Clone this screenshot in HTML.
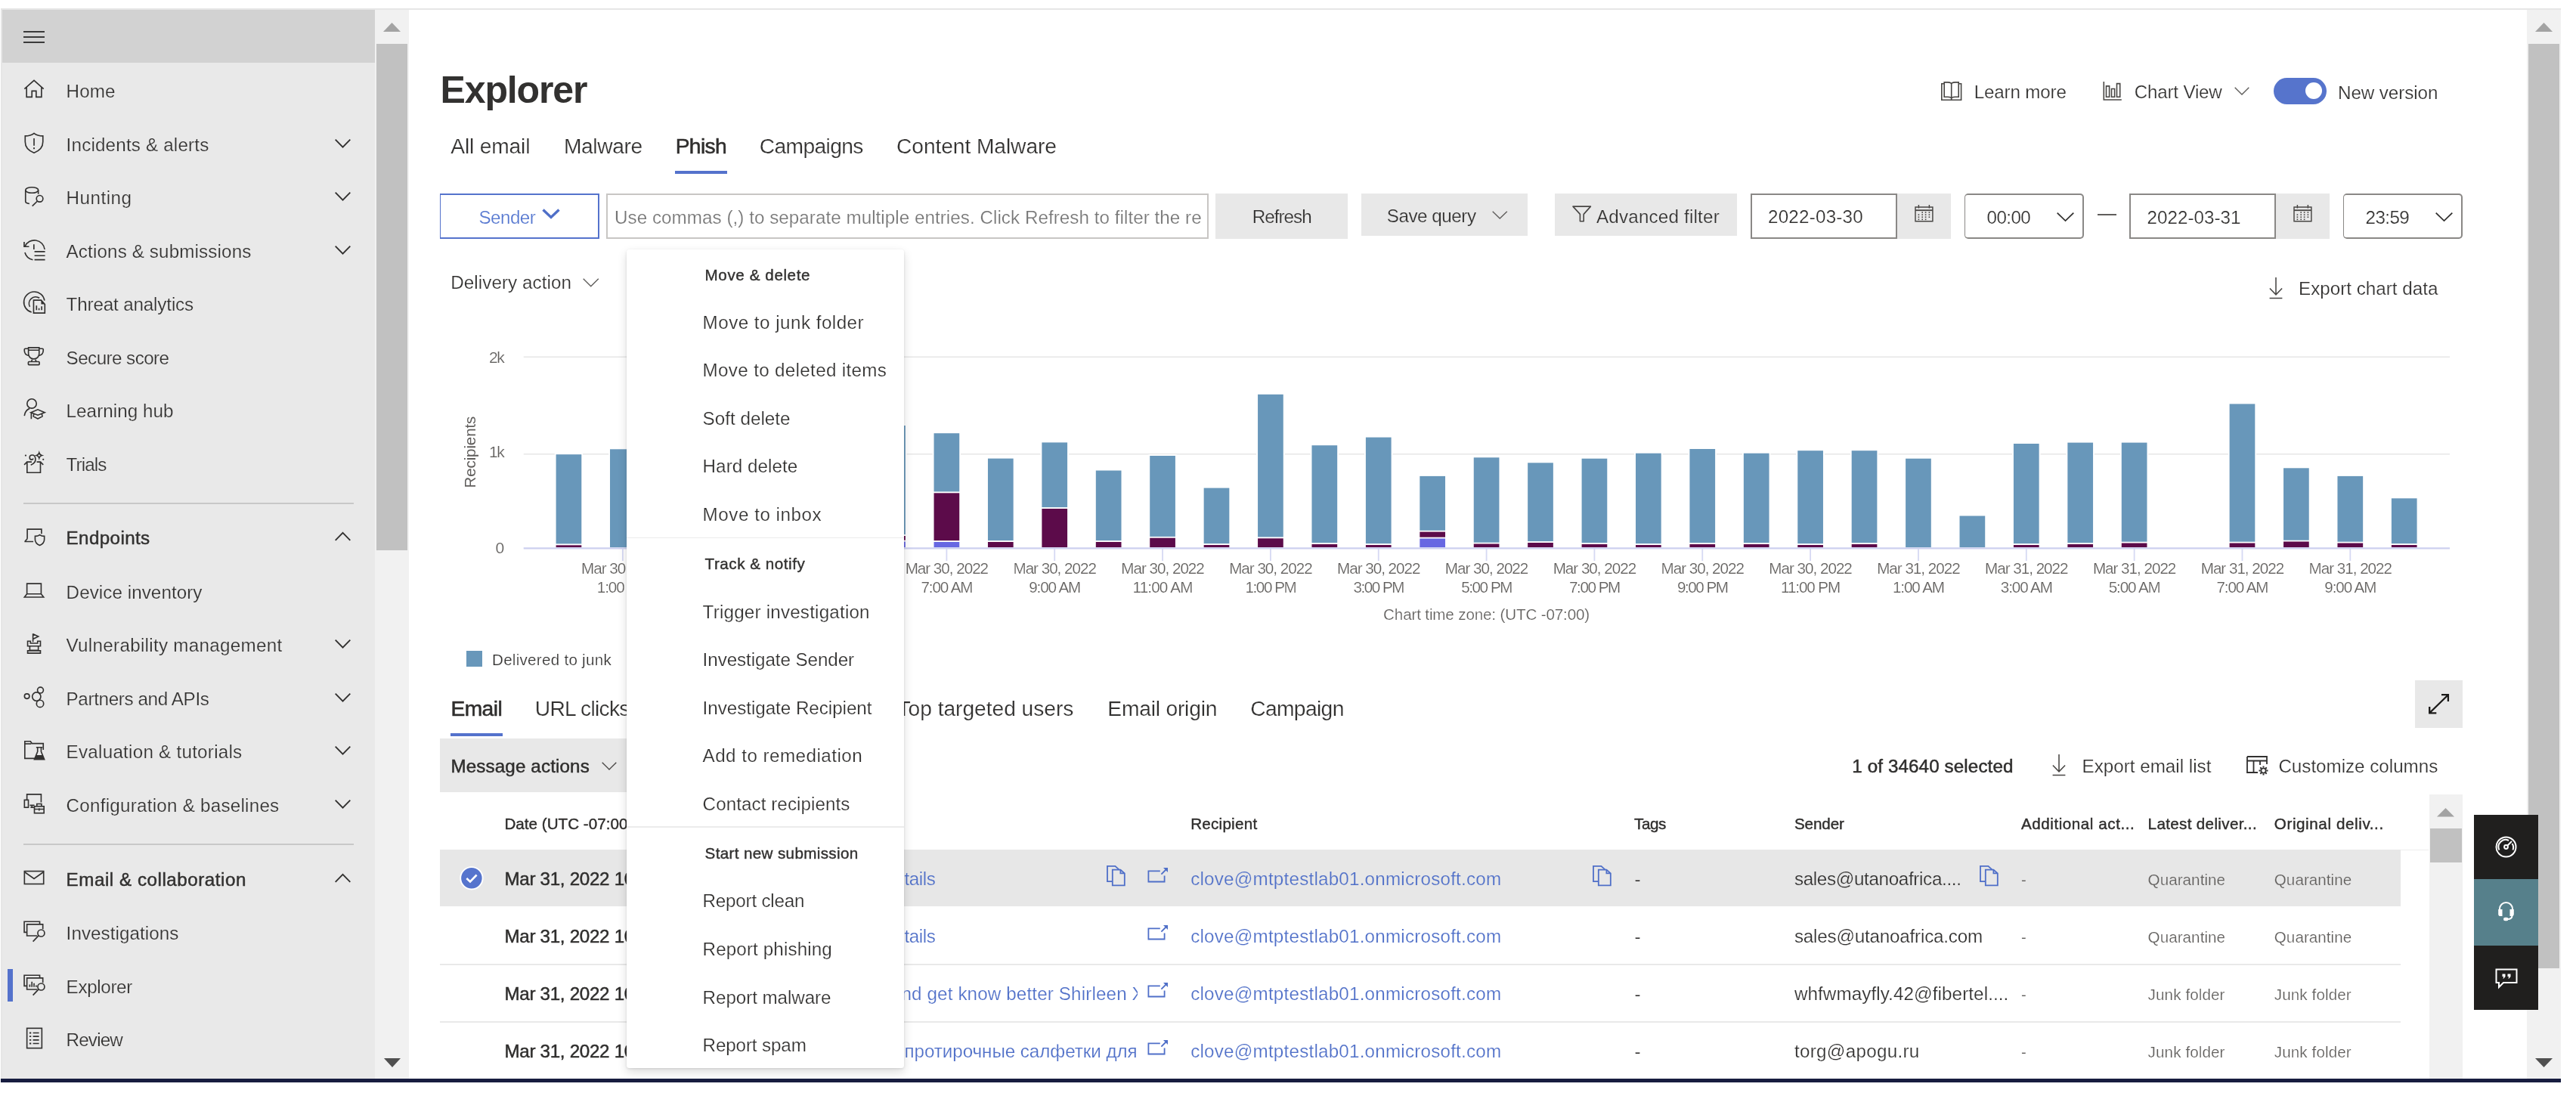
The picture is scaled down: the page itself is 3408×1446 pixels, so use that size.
<!DOCTYPE html>
<html lang="en"><head><meta charset="utf-8"><title>Explorer - Microsoft 365 Defender</title>
<style>
html,body{margin:0;padding:0;background:#fff;}
body{width:3408px;height:1446px;position:relative;overflow:hidden;font-family:"Liberation Sans",Arial,sans-serif;}
.t{position:absolute;white-space:nowrap;}
.r{position:absolute;}
#root{position:absolute;left:0;top:0;width:3408px;height:1446px;will-change:transform;}
svg{overflow:visible;}
</style></head><body><div id="root">
<div class="r" style="left:1.00px;top:11.00px;width:3387.00px;height:1421.00px;background:#e6e6e6;"></div>
<div class="r" style="left:3.00px;top:13.00px;width:3385.00px;height:1415.00px;background:#ffffff;"></div>
<div class="r" style="left:1.00px;top:1427.00px;width:3387.00px;height:5.00px;background:#171d40;"></div>
<div class="r" style="left:3.00px;top:13.00px;width:493.00px;height:1414.00px;background:#e9e9e9;"></div>
<div class="r" style="left:3.00px;top:13.00px;width:493.00px;height:69.60px;background:#d2d2d2;"></div>
<div class="r" style="left:31.00px;top:41.00px;width:28.00px;height:2.10px;background:#3a3a3a;"></div>
<div class="r" style="left:31.00px;top:48.00px;width:28.00px;height:2.10px;background:#3a3a3a;"></div>
<div class="r" style="left:31.00px;top:55.00px;width:28.00px;height:2.10px;background:#3a3a3a;"></div>
<div class="r" style="left:496.00px;top:13.00px;width:45.00px;height:1414.00px;background:#f1f1f1;"></div>
<div class="r" style="left:498.00px;top:58.00px;width:41.00px;height:669.50px;background:#c1c1c1;"></div>
<svg class="r" style="left:507.00px;top:30.00px;" width="23" height="12" viewBox="0 0 23 12" fill="none"><path d="M0 12 L11.5 0 L23 12Z" fill="#a3a3a3"/></svg>
<svg class="r" style="left:507.50px;top:1400.00px;" width="22" height="12" viewBox="0 0 22 12" fill="none"><path d="M0 0 L22 0 L11 12Z" fill="#505050"/></svg>
<div class="t" style="left:87.60px;top:105px;font-size:24.2px;line-height:31px;height:31px;color:#323130;letter-spacing:0.111px;-webkit-text-stroke:0.22px #e9e9e9;">Home</div>
<svg class="r" style="left:29.50px;top:103.00px;" width="31" height="31" viewBox="0 0 33 33" fill="none"><path stroke="#323130" stroke-width="1.75" fill="none" stroke-linejoin="miter" stroke-linecap="butt" d="M2.5 15.5 L16 3.5 L29.5 15.5 M5.5 13 V27 H13 V18.5 H19 V27 H26.5 V13"/></svg>
<div class="t" style="left:87.60px;top:176px;font-size:24.2px;line-height:31px;height:31px;color:#323130;letter-spacing:0.187px;-webkit-text-stroke:0.22px #e9e9e9;">Incidents &amp; alerts</div>
<svg class="r" style="left:29.50px;top:173.60px;" width="31" height="31" viewBox="0 0 33 33" fill="none"><path stroke="#323130" stroke-width="1.75" fill="none" stroke-linejoin="miter" stroke-linecap="butt" d="M16 2.5 C12.5 5.2 8 6.3 3.5 6.3 V14.5 C3.5 22 9 27.5 16 30 C23 27.5 28.5 22 28.5 14.5 V6.3 C24 6.3 19.5 5.2 16 2.5Z M16 9.5 V20"/><rect x="15" y="22.5" width="2" height="2.2" fill="#323130"/></svg>
<svg class="r" style="left:442.50px;top:183.60px;" width="21" height="11.5" viewBox="0 0 21 11.5" fill="none"><path d="M0.7 0.7 L10.5 10.6 L20.3 0.7" stroke="#323130" stroke-width="1.9" fill="none"/></svg>
<div class="t" style="left:87.60px;top:246px;font-size:24.2px;line-height:31px;height:31px;color:#323130;letter-spacing:0.512px;-webkit-text-stroke:0.22px #e9e9e9;">Hunting</div>
<svg class="r" style="left:29.50px;top:244.10px;" width="31" height="31" viewBox="0 0 33 33" fill="none"><path stroke="#323130" stroke-width="1.75" fill="none" stroke-linejoin="miter" stroke-linecap="butt" d="M4 8 V24 C4 25.5 6.5 26.8 9.5 27.2 M22 8 V13.5"/><ellipse stroke="#323130" stroke-width="1.75" fill="none" stroke-linejoin="miter" stroke-linecap="butt" cx="13" cy="8" rx="9" ry="4"/><circle stroke="#323130" stroke-width="1.75" fill="none" stroke-linejoin="miter" stroke-linecap="butt" cx="24" cy="20" r="4.6"/><path stroke="#323130" stroke-width="1.75" fill="none" stroke-linejoin="miter" stroke-linecap="butt" d="M20.8 23.4 L13.5 30.5"/></svg>
<svg class="r" style="left:442.50px;top:254.10px;" width="21" height="11.5" viewBox="0 0 21 11.5" fill="none"><path d="M0.7 0.7 L10.5 10.6 L20.3 0.7" stroke="#323130" stroke-width="1.9" fill="none"/></svg>
<div class="t" style="left:87.60px;top:317px;font-size:24.2px;line-height:31px;height:31px;color:#323130;letter-spacing:0.138px;-webkit-text-stroke:0.22px #e9e9e9;">Actions &amp; submissions</div>
<svg class="r" style="left:29.50px;top:314.70px;" width="31" height="31" viewBox="0 0 33 33" fill="none"><path stroke="#323130" stroke-width="1.75" fill="none" stroke-linejoin="miter" stroke-linecap="butt" d="M3.1 11.8 A14.6 14.6 0 0 1 31 16 M3.1 20.3 A14.6 14.6 0 0 0 14.3 30.6 M2.1 5.4 V12 H9 M15.8 8.8 V16"/><path stroke="#323130" stroke-width="1.75" fill="none" stroke-linejoin="miter" stroke-linecap="butt" stroke-width="1.9" d="M16.6 19.1 H31.5 M16.6 24.7 H31.5 M16.6 30.4 H31.5"/></svg>
<svg class="r" style="left:442.50px;top:324.70px;" width="21" height="11.5" viewBox="0 0 21 11.5" fill="none"><path d="M0.7 0.7 L10.5 10.6 L20.3 0.7" stroke="#323130" stroke-width="1.9" fill="none"/></svg>
<div class="t" style="left:87.60px;top:387px;font-size:24.2px;line-height:31px;height:31px;color:#323130;letter-spacing:-0.145px;-webkit-text-stroke:0.22px #e9e9e9;">Threat analytics</div>
<svg class="r" style="left:29.50px;top:385.20px;" width="31" height="31" viewBox="0 0 33 33" fill="none"><path stroke="#323130" stroke-width="1.75" fill="none" stroke-linejoin="miter" stroke-linecap="butt" d="M12.5 29.8 A14.6 14.6 0 1 1 30.7 13.4 M10.1 22.2 A9.4 9.4 0 0 1 23.6 9.9"/><path stroke="#323130" stroke-width="1.75" fill="none" stroke-linejoin="miter" stroke-linecap="butt" d="M15.4 12.9 H26 L31.2 18.6 V31 H15.4Z"/><path fill="#323130" d="M26 12.9 L31.2 18.6 H26Z"/><path stroke="#323130" stroke-width="1.75" fill="none" stroke-linejoin="miter" stroke-linecap="butt" stroke-width="1.6" d="M19.5 26.8 V20.4 M23 26.8 V24.3 M26.8 26.8 V21.6"/></svg>
<div class="t" style="left:87.60px;top:458px;font-size:24.2px;line-height:31px;height:31px;color:#323130;letter-spacing:-0.548px;-webkit-text-stroke:0.22px #e9e9e9;">Secure score</div>
<svg class="r" style="left:29.50px;top:455.80px;" width="31" height="31" viewBox="0 0 33 33" fill="none"><path stroke="#323130" stroke-width="1.75" fill="none" stroke-linejoin="miter" stroke-linecap="butt" d="M8.1 4.2 H23.2 V12.5 C23.2 17 20 20.1 15.65 20.1 C11.3 20.1 8.1 17 8.1 12.5Z M8.1 7.7 H23.2 M8.1 5.6 H3.6 C2.9 5.6 2.4 6.1 2.4 6.8 V8 C2.4 12 4.8 14.7 8.6 15.5 M23.2 5.6 H27.8 C28.5 5.6 29 6.1 29 6.8 V8 C29 12 26.6 14.7 22.8 15.5 M13.6 20.1 L12.4 24 M17.8 20.1 L19 24"/><rect stroke="#323130" stroke-width="1.75" fill="none" stroke-linejoin="miter" stroke-linecap="butt" x="7.9" y="24" width="15.6" height="4.4" rx="1"/></svg>
<div class="t" style="left:87.60px;top:528px;font-size:24.2px;line-height:31px;height:31px;color:#323130;letter-spacing:0.059px;-webkit-text-stroke:0.22px #e9e9e9;">Learning hub</div>
<svg class="r" style="left:29.50px;top:526.40px;" width="31" height="31" viewBox="0 0 33 33" fill="none"><circle stroke="#323130" stroke-width="1.75" fill="none" stroke-linejoin="miter" stroke-linecap="butt" cx="12.8" cy="8.5" r="6.6"/><path stroke="#323130" stroke-width="1.75" fill="none" stroke-linejoin="miter" stroke-linecap="butt" d="M2.4 25.7 C3 20.5 5.5 17 9.7 15.3 M11.6 21 L21.3 16.8 L31 21 L21.3 24.7Z M15.8 23 L15.1 26.5 L21.3 29.8 L27.7 26.5 L27 23 M12.1 21 V30"/></svg>
<div class="t" style="left:87.60px;top:599px;font-size:24.2px;line-height:31px;height:31px;color:#323130;letter-spacing:-0.876px;-webkit-text-stroke:0.22px #e9e9e9;">Trials</div>
<svg class="r" style="left:29.50px;top:596.90px;" width="31" height="31" viewBox="0 0 33 33" fill="none"><path stroke="#323130" stroke-width="1.75" fill="none" stroke-linejoin="miter" stroke-linecap="butt" d="M12.8 15 H6.2 V30.1 H25 V15 H19.8 M6.2 15 L2.2 19 M25 15 L29 19"/><path stroke="#323130" stroke-width="1.75" fill="none" stroke-linejoin="miter" stroke-linecap="butt" d="M11.4 19.4 C16 17.5 18.5 14.5 18 10.5 C17.6 7 15.5 5.3 13.6 5.3 C11.3 5.3 9.8 7 9.8 8.8 C9.8 10.6 11.2 11.8 12.6 11.8 C13.8 11.8 14.6 11 14.6 10"/><path stroke="#323130" stroke-width="1.75" fill="none" stroke-linejoin="miter" stroke-linecap="butt" stroke-width="1.4" d="M23.2 2.2 Q24 5.1 26.9 5.9 Q24 6.7 23.2 9.6 Q22.4 6.7 19.5 5.9 Q22.4 5.1 23.2 2.2Z"/><circle cx="4.2" cy="5.9" r="1.2" fill="#323130"/><circle cx="29" cy="11.5" r="1.2" fill="#323130"/></svg>
<div class="t" style="left:87.60px;top:696px;font-size:24.2px;line-height:31px;height:31px;color:#323130;letter-spacing:0.373px;-webkit-text-stroke:0.48px #323130;">Endpoints</div>
<svg class="r" style="left:29.50px;top:693.80px;" width="31" height="31" viewBox="0 0 33 33" fill="none"><path stroke="#323130" stroke-width="1.75" fill="none" stroke-linejoin="miter" stroke-linecap="butt" d="M6.5 20 V6.5 H26.5 V13 M2.5 24 H15 M6.5 20 L3 24"/><path stroke="#323130" stroke-width="1.75" fill="none" stroke-linejoin="miter" stroke-linecap="butt" d="M24 14.5 C22.3 15.8 20 16.4 17.5 16.4 V21 C17.5 24.8 20.2 27.6 24 29.2 C27.8 27.6 30.5 24.8 30.5 21 V16.4 C28 16.4 25.7 15.8 24 14.5Z"/></svg>
<svg class="r" style="left:442.50px;top:703.80px;" width="21" height="11.5" viewBox="0 0 21 11.5" fill="none"><path d="M0.7 10.8 L10.5 0.9 L20.3 10.8" stroke="#323130" stroke-width="1.9" fill="none"/></svg>
<div class="t" style="left:87.60px;top:768px;font-size:24.2px;line-height:31px;height:31px;color:#323130;letter-spacing:0.069px;-webkit-text-stroke:0.22px #e9e9e9;">Device inventory</div>
<svg class="r" style="left:29.50px;top:765.80px;" width="31" height="31" viewBox="0 0 33 33" fill="none"><path stroke="#323130" stroke-width="1.75" fill="none" stroke-linejoin="miter" stroke-linecap="butt" d="M6 21 V6.5 H26 V21 M6 21 L2.5 25.5 H29.5 L26 21 Z"/></svg>
<div class="t" style="left:87.60px;top:838px;font-size:24.2px;line-height:31px;height:31px;color:#323130;letter-spacing:0.295px;-webkit-text-stroke:0.22px #e9e9e9;">Vulnerability management</div>
<svg class="r" style="left:29.50px;top:836.30px;" width="31" height="31" viewBox="0 0 33 33" fill="none"><path stroke="#323130" stroke-width="1.75" fill="none" stroke-linejoin="miter" stroke-linecap="butt" d="M14.5 14 V2.5 M14.5 3 L22 6.5 L14.5 10 M7 13 H11 V16 H21 V13 H25 V20 H22 V26 H10 V20 H7Z M10 20 H22 M7 26.5 V30 H25 V26.5Z"/></svg>
<svg class="r" style="left:442.50px;top:846.30px;" width="21" height="11.5" viewBox="0 0 21 11.5" fill="none"><path d="M0.7 0.7 L10.5 10.6 L20.3 0.7" stroke="#323130" stroke-width="1.9" fill="none"/></svg>
<div class="t" style="left:87.60px;top:909px;font-size:24.2px;line-height:31px;height:31px;color:#323130;letter-spacing:-0.356px;-webkit-text-stroke:0.22px #e9e9e9;">Partners and APIs</div>
<svg class="r" style="left:29.50px;top:906.80px;" width="31" height="31" viewBox="0 0 33 33" fill="none"><circle stroke="#323130" stroke-width="1.75" fill="none" stroke-linejoin="miter" stroke-linecap="butt" cx="6" cy="15" r="3.5"/><circle stroke="#323130" stroke-width="1.75" fill="none" stroke-linejoin="miter" stroke-linecap="butt" cx="25" cy="6.5" r="4.2"/><circle stroke="#323130" stroke-width="1.75" fill="none" stroke-linejoin="miter" stroke-linecap="butt" cx="19.5" cy="15.5" r="6"/><circle stroke="#323130" stroke-width="1.75" fill="none" stroke-linejoin="miter" stroke-linecap="butt" cx="24.5" cy="25.5" r="5"/></svg>
<svg class="r" style="left:442.50px;top:916.80px;" width="21" height="11.5" viewBox="0 0 21 11.5" fill="none"><path d="M0.7 0.7 L10.5 10.6 L20.3 0.7" stroke="#323130" stroke-width="1.9" fill="none"/></svg>
<div class="t" style="left:87.60px;top:979px;font-size:24.2px;line-height:31px;height:31px;color:#323130;letter-spacing:0.257px;-webkit-text-stroke:0.22px #e9e9e9;">Evaluation &amp; tutorials</div>
<svg class="r" style="left:29.50px;top:977.40px;" width="31" height="31" viewBox="0 0 33 33" fill="none"><path stroke="#323130" stroke-width="1.75" fill="none" stroke-linejoin="miter" stroke-linecap="butt" d="M17 28 H3 V4 H11 L13 7 H29 V16"/><path stroke="#323130" stroke-width="1.75" fill="none" stroke-linejoin="miter" stroke-linecap="butt" d="M3 7.5 H12"/><path stroke="#323130" stroke-width="1.75" fill="none" stroke-linejoin="miter" stroke-linecap="butt" d="M19 12.5 H28 M21 12.5 V18.5 L16.5 29.5 H30.5 L26 18.5 V12.5"/><path fill="#323130" d="M19 23.5 H28 L30.5 29.5 H16.5Z"/></svg>
<svg class="r" style="left:442.50px;top:987.40px;" width="21" height="11.5" viewBox="0 0 21 11.5" fill="none"><path d="M0.7 0.7 L10.5 10.6 L20.3 0.7" stroke="#323130" stroke-width="1.9" fill="none"/></svg>
<div class="t" style="left:87.60px;top:1050px;font-size:24.2px;line-height:31px;height:31px;color:#323130;letter-spacing:0.248px;-webkit-text-stroke:0.22px #e9e9e9;">Configuration &amp; baselines</div>
<svg class="r" style="left:29.50px;top:1047.90px;" width="31" height="31" viewBox="0 0 33 33" fill="none"><path stroke="#323130" stroke-width="1.75" fill="none" stroke-linejoin="miter" stroke-linecap="butt" d="M6 11 V3 H26 V14.5 M10 18.5 H16.5 M13 18.5 V21.5 M11 21.5 H16"/><rect stroke="#323130" stroke-width="1.75" fill="none" stroke-linejoin="miter" stroke-linecap="butt" x="2.5" y="11" width="5.5" height="10.5"/><rect stroke="#323130" stroke-width="1.75" fill="none" stroke-linejoin="miter" stroke-linecap="butt" x="16.5" y="20" width="13.5" height="9.5"/><path stroke="#323130" stroke-width="1.75" fill="none" stroke-linejoin="miter" stroke-linecap="butt" d="M20 20 V16.5 H26.5 V20 M16.5 24 H30 M23.2 22.5 V26"/></svg>
<svg class="r" style="left:442.50px;top:1057.90px;" width="21" height="11.5" viewBox="0 0 21 11.5" fill="none"><path d="M0.7 0.7 L10.5 10.6 L20.3 0.7" stroke="#323130" stroke-width="1.9" fill="none"/></svg>
<div class="t" style="left:87.60px;top:1148px;font-size:24.2px;line-height:31px;height:31px;color:#323130;letter-spacing:0.532px;-webkit-text-stroke:0.48px #323130;">Email &amp; collaboration</div>
<svg class="r" style="left:29.50px;top:1146.00px;" width="31" height="31" viewBox="0 0 33 33" fill="none"><rect stroke="#323130" stroke-width="1.75" fill="none" stroke-linejoin="miter" stroke-linecap="butt" x="2.5" y="7" width="27" height="18"/><path stroke="#323130" stroke-width="1.75" fill="none" stroke-linejoin="miter" stroke-linecap="butt" d="M2.5 8 L16 17.5 L29.5 8"/></svg>
<svg class="r" style="left:442.50px;top:1156.00px;" width="21" height="11.5" viewBox="0 0 21 11.5" fill="none"><path d="M0.7 10.8 L10.5 0.9 L20.3 10.8" stroke="#323130" stroke-width="1.9" fill="none"/></svg>
<div class="t" style="left:87.60px;top:1219px;font-size:24.2px;line-height:31px;height:31px;color:#323130;letter-spacing:0.073px;-webkit-text-stroke:0.22px #e9e9e9;">Investigations</div>
<svg class="r" style="left:29.50px;top:1217.00px;" width="31" height="31" viewBox="0 0 33 33" fill="none"><path stroke="#323130" stroke-width="1.75" fill="none" stroke-linejoin="miter" stroke-linecap="butt" d="M24 6.2 V2.4 H2.2 V17.4 H6"/><path stroke="#323130" stroke-width="1.75" fill="none" stroke-linejoin="miter" stroke-linecap="butt" d="M20.5 22.4 H6 V6.2 H28.4 V13"/><circle stroke="#323130" stroke-width="1.75" fill="none" stroke-linejoin="miter" stroke-linecap="butt" cx="26" cy="18.6" r="4.8"/><path stroke="#323130" stroke-width="1.75" fill="none" stroke-linejoin="miter" stroke-linecap="butt" d="M22.6 22 L14.5 30.5"/></svg>
<div class="t" style="left:87.60px;top:1290px;font-size:24.2px;line-height:31px;height:31px;color:#323130;letter-spacing:-0.340px;-webkit-text-stroke:0.22px #e9e9e9;">Explorer</div>
<svg class="r" style="left:29.50px;top:1287.60px;" width="31" height="31" viewBox="0 0 33 33" fill="none"><path stroke="#323130" stroke-width="1.75" fill="none" stroke-linejoin="miter" stroke-linecap="butt" d="M24 6.2 V2.4 H2.2 V17.4 H6"/><path stroke="#323130" stroke-width="1.75" fill="none" stroke-linejoin="miter" stroke-linecap="butt" d="M20.5 22.4 H6 V6.2 H28.4 V13"/><circle stroke="#323130" stroke-width="1.75" fill="none" stroke-linejoin="miter" stroke-linecap="butt" cx="26" cy="18.6" r="4.8"/><path stroke="#323130" stroke-width="1.75" fill="none" stroke-linejoin="miter" stroke-linecap="butt" d="M22.6 22 L14.5 30.5"/><path stroke="#323130" stroke-width="1.75" fill="none" stroke-linejoin="miter" stroke-linecap="butt" stroke-width="1.5" d="M10 19 V15.5 M13 19 V11.5 M16 19 V13.5 M19 19 V16.5"/></svg>
<div class="t" style="left:87.60px;top:1360px;font-size:24.2px;line-height:31px;height:31px;color:#323130;letter-spacing:-0.825px;-webkit-text-stroke:0.22px #e9e9e9;">Review</div>
<svg class="r" style="left:29.50px;top:1358.20px;" width="31" height="31" viewBox="0 0 33 33" fill="none"><rect stroke="#323130" stroke-width="1.75" fill="none" stroke-linejoin="miter" stroke-linecap="butt" x="6" y="2.5" width="21" height="28"/><path stroke="#323130" stroke-width="1.75" fill="none" stroke-linejoin="miter" stroke-linecap="butt" d="M14.5 9 H23 M14.5 14 H23 M14.5 19 H23 M14.5 24 H23"/><path stroke="#323130" stroke-width="2" d="M9.5 9 H12 M9.5 14 H12 M9.5 19 H12 M9.5 24 H12"/></svg>
<div class="r" style="left:31.00px;top:665.10px;width:437.00px;height:1.80px;background:#c8c8c8;"></div>
<div class="r" style="left:31.00px;top:1116.00px;width:437.00px;height:1.80px;background:#c8c8c8;"></div>
<div class="r" style="left:10.00px;top:1282.00px;width:7.00px;height:42.50px;background:#5472cc;"></div>
<div class="t" style="left:582.60px;top:91px;font-size:50px;line-height:56px;height:56px;color:#323130;letter-spacing:-1.157px;font-weight:700;">Explorer</div>
<svg class="r" style="left:2568.00px;top:107.50px;" width="28" height="26" viewBox="0 0 28 26" fill="none"><path stroke="#484644" stroke-width="1.6" fill="none" d="M4 2.7 H0.8 V24.2 H26.6 V2.7 H23.4"/><path stroke="#484644" stroke-width="1.6" fill="none" d="M4.2 0.9 H9 C11.6 0.9 13.7 2 13.7 3.6 V22.6 C13.7 21.2 11.6 20.3 9 20.3 H4.2Z M23.2 0.9 H18.4 C15.8 0.9 13.7 2 13.7 3.6 V22.6 C13.7 21.2 15.8 20.3 18.4 20.3 H23.2Z M13.7 22.6 V24.2"/></svg>
<div class="t" style="left:2611.80px;top:106px;font-size:24.2px;line-height:31px;height:31px;color:#323130;letter-spacing:-0.176px;-webkit-text-stroke:0.22px #fff;">Learn more</div>
<svg class="r" style="left:2782.00px;top:107.00px;" width="26" height="27" viewBox="0 0 26 27" fill="none"><path stroke="#484644" stroke-width="1.6" fill="none" d="M1.3 1 V25 H24.8"/><path stroke="#484644" stroke-width="1.6" fill="none" stroke-width="1.4" d="M4.5 6.9 H8.6 V21.2 H4.5Z M11.5 10.5 H15.6 V21.2 H11.5Z M18.5 3.6 H22.7 V21.2 H18.5Z"/></svg>
<div class="t" style="left:2823.70px;top:106px;font-size:24.2px;line-height:31px;height:31px;color:#323130;letter-spacing:-0.192px;-webkit-text-stroke:0.22px #fff;">Chart View</div>
<svg class="r" style="left:2955.50px;top:115.00px;" width="20" height="11" viewBox="0 0 20 11" fill="none"><path d="M0.7 0.7 L10.0 10.1 L19.3 0.7" stroke="#605e5c" stroke-width="1.4" fill="none"/></svg>
<div class="r" style="left:3007.7px;top:102.6px;width:70.5px;height:35.4px;border-radius:18px;background:#5674cc;"></div>
<div class="r" style="left:3049.5px;top:109.3px;width:22px;height:22px;border-radius:11px;background:#fff;"></div>
<div class="t" style="left:3093.00px;top:107px;font-size:24.2px;line-height:31px;height:31px;color:#323130;letter-spacing:-0.068px;-webkit-text-stroke:0.22px #fff;">New version</div>
<div class="t" style="left:596.30px;top:176px;font-size:28.2px;line-height:35px;height:35px;color:#323130;letter-spacing:-0.174px;-webkit-text-stroke:0.22px #fff;">All email</div>
<div class="t" style="left:745.90px;top:176px;font-size:28.2px;line-height:35px;height:35px;color:#323130;letter-spacing:-0.367px;-webkit-text-stroke:0.22px #fff;">Malware</div>
<div class="t" style="left:893.70px;top:176px;font-size:28.2px;line-height:35px;height:35px;color:#2f2e2d;letter-spacing:-0.629px;-webkit-text-stroke:0.56px #2f2e2d;">Phish</div>
<div class="r" style="left:893.00px;top:226.00px;width:69.00px;height:3.80px;background:#5472cc;"></div>
<div class="t" style="left:1004.80px;top:176px;font-size:28.2px;line-height:35px;height:35px;color:#323130;letter-spacing:-0.627px;-webkit-text-stroke:0.22px #fff;">Campaigns</div>
<div class="t" style="left:1186.00px;top:176px;font-size:28.2px;line-height:35px;height:35px;color:#323130;letter-spacing:-0.078px;-webkit-text-stroke:0.22px #fff;">Content Malware</div>
<div class="r" style="left:581.70px;top:256.30px;width:211.30px;height:59.30px;background:#5573cc;border-radius:0px;"><div class="r" style="left:1.6px;top:1.6px;right:1.6px;bottom:1.6px;background:#fff;border-radius:0.00px;"></div></div>
<div class="t" style="left:633.40px;top:272px;font-size:24.2px;line-height:31px;height:31px;color:#5577d0;letter-spacing:-0.507px;-webkit-text-stroke:0.22px #fff;">Sender</div>
<svg class="r" style="left:717.00px;top:276.00px;" width="24" height="14" viewBox="0 0 24 14" fill="none"><path d="M1.5 1.5 L12 11.5 L22.5 1.5" stroke="#4f6fc8" stroke-width="3.4" fill="none"/></svg>
<div class="r" style="left:802.00px;top:256.30px;width:796.60px;height:59.30px;background:#c8c6c4;border-radius:0px;"><div class="r" style="left:1.9px;top:1.9px;right:1.9px;bottom:1.9px;background:#fff;border-radius:0.00px;"></div></div>
<div class="t" style="left:813.00px;top:272px;font-size:24.2px;line-height:31px;height:31px;color:#767676;-webkit-text-stroke:0.22px #fff;width:777.0px;overflow:hidden;letter-spacing:0.05px;">Use commas (,) to separate multiple entries. Click Refresh to filter the results</div>
<div class="r" style="left:1607.50px;top:256.30px;width:175.50px;height:59.30px;background:#e8e8e8;"></div>
<div class="t" style="left:1656.70px;top:271px;font-size:24.2px;line-height:31px;height:31px;color:#323130;letter-spacing:-0.963px;-webkit-text-stroke:0.22px #e8e8e8;">Refresh</div>
<div class="r" style="left:1801.00px;top:256.30px;width:220.00px;height:56.00px;background:#e8e8e8;"></div>
<div class="t" style="left:1834.70px;top:270px;font-size:24.2px;line-height:31px;height:31px;color:#323130;letter-spacing:-0.442px;-webkit-text-stroke:0.22px #e8e8e8;">Save query</div>
<svg class="r" style="left:1973.50px;top:279.00px;" width="20.5" height="11" viewBox="0 0 20.5 11" fill="none"><path d="M0.7 0.7 L10.25 10.1 L19.8 0.7" stroke="#605e5c" stroke-width="1.4" fill="none"/></svg>
<div class="r" style="left:2056.80px;top:256.30px;width:241.20px;height:56.00px;background:#e8e8e8;"></div>
<svg class="r" style="left:2079.50px;top:272.40px;" width="26" height="22" viewBox="0 0 26 22" fill="none"><path stroke="#484644" stroke-width="1.6" fill="none" stroke-linejoin="round" d="M1 1.1 H24.4 L15.2 11.4 V20.8 H10.4 V11.4Z"/></svg>
<div class="t" style="left:2112.00px;top:271px;font-size:24.2px;line-height:31px;height:31px;color:#323130;letter-spacing:0.195px;-webkit-text-stroke:0.22px #e8e8e8;">Advanced filter</div>
<div class="r" style="left:2509.00px;top:256.30px;width:71.50px;height:59.30px;background:#e8e8e8;"></div>
<div class="r" style="left:2316.00px;top:256.30px;width:194.00px;height:59.30px;background:#8a8886;border-radius:0px;"><div class="r" style="left:1.75px;top:1.75px;right:1.75px;bottom:1.75px;background:#fff;border-radius:0.00px;"></div></div>
<div class="t" style="left:2339.00px;top:271px;font-size:24.2px;line-height:31px;height:31px;color:#323130;letter-spacing:0.221px;-webkit-text-stroke:0.22px #fff;">2022-03-30</div>
<svg class="r" style="left:2532.00px;top:270.00px;" width="27" height="24" viewBox="0 0 27 24" fill="none"><path stroke="#484644" stroke-width="1.45" fill="none" d="M2 4 H24.9 V22.8 H2Z M6.4 1.1 V5.4 M20.4 1.1 V5.4"/><path stroke="#484644" stroke-width="1.8" fill="none" d="M2 8.2 H24.9"/><g fill="#484644"><rect x="10.399999999999999" y="10.2" width="1.6" height="1.6"/><rect x="14.799999999999999" y="10.2" width="1.6" height="1.6"/><rect x="19.599999999999998" y="10.2" width="1.6" height="1.6"/><rect x="5.6000000000000005" y="13.299999999999999" width="1.6" height="1.6"/><rect x="10.399999999999999" y="13.299999999999999" width="1.6" height="1.6"/><rect x="14.799999999999999" y="13.299999999999999" width="1.6" height="1.6"/><rect x="19.599999999999998" y="13.299999999999999" width="1.6" height="1.6"/><rect x="5.6000000000000005" y="16.4" width="1.6" height="1.6"/><rect x="10.399999999999999" y="16.4" width="1.6" height="1.6"/><rect x="14.799999999999999" y="16.4" width="1.6" height="1.6"/><rect x="19.599999999999998" y="16.4" width="1.6" height="1.6"/><rect x="5.6000000000000005" y="19.5" width="1.6" height="1.6"/><rect x="10.399999999999999" y="19.5" width="1.6" height="1.6"/><rect x="14.799999999999999" y="19.5" width="1.6" height="1.6"/></g></svg>
<div class="r" style="left:2598.50px;top:256.30px;width:158.10px;height:59.30px;background:#8a8886;border-radius:5px;"><div class="r" style="left:1.8px;top:1.8px;right:1.8px;bottom:1.8px;background:#fff;border-radius:3.20px;"></div></div>
<div class="t" style="left:2628.60px;top:272px;font-size:24.2px;line-height:31px;height:31px;color:#323130;letter-spacing:-0.612px;-webkit-text-stroke:0.22px #fff;">00:00</div>
<svg class="r" style="left:2721.00px;top:280.50px;" width="23" height="12" viewBox="0 0 23 12" fill="none"><path d="M0.7 0.7 L11.5 11.1 L22.3 0.7" stroke="#323130" stroke-width="1.8" fill="none"/></svg>
<div class="r" style="left:2774.80px;top:282.80px;width:24.80px;height:2.10px;background:#605e5c;"></div>
<div class="r" style="left:3010.00px;top:256.30px;width:72.00px;height:59.30px;background:#e8e8e8;"></div>
<div class="r" style="left:2817.00px;top:256.30px;width:194.00px;height:59.30px;background:#8a8886;border-radius:0px;"><div class="r" style="left:1.75px;top:1.75px;right:1.75px;bottom:1.75px;background:#fff;border-radius:0.00px;"></div></div>
<div class="t" style="left:2840.50px;top:272px;font-size:24.2px;line-height:31px;height:31px;color:#323130;letter-spacing:0.021px;-webkit-text-stroke:0.22px #fff;">2022-03-31</div>
<svg class="r" style="left:3033.20px;top:270.00px;" width="27" height="24" viewBox="0 0 27 24" fill="none"><path stroke="#484644" stroke-width="1.45" fill="none" d="M2 4 H24.9 V22.8 H2Z M6.4 1.1 V5.4 M20.4 1.1 V5.4"/><path stroke="#484644" stroke-width="1.8" fill="none" d="M2 8.2 H24.9"/><g fill="#484644"><rect x="10.399999999999999" y="10.2" width="1.6" height="1.6"/><rect x="14.799999999999999" y="10.2" width="1.6" height="1.6"/><rect x="19.599999999999998" y="10.2" width="1.6" height="1.6"/><rect x="5.6000000000000005" y="13.299999999999999" width="1.6" height="1.6"/><rect x="10.399999999999999" y="13.299999999999999" width="1.6" height="1.6"/><rect x="14.799999999999999" y="13.299999999999999" width="1.6" height="1.6"/><rect x="19.599999999999998" y="13.299999999999999" width="1.6" height="1.6"/><rect x="5.6000000000000005" y="16.4" width="1.6" height="1.6"/><rect x="10.399999999999999" y="16.4" width="1.6" height="1.6"/><rect x="14.799999999999999" y="16.4" width="1.6" height="1.6"/><rect x="19.599999999999998" y="16.4" width="1.6" height="1.6"/><rect x="5.6000000000000005" y="19.5" width="1.6" height="1.6"/><rect x="10.399999999999999" y="19.5" width="1.6" height="1.6"/><rect x="14.799999999999999" y="19.5" width="1.6" height="1.6"/></g></svg>
<div class="r" style="left:3099.60px;top:256.30px;width:158.10px;height:59.30px;background:#8a8886;border-radius:5px;"><div class="r" style="left:1.8px;top:1.8px;right:1.8px;bottom:1.8px;background:#fff;border-radius:3.20px;"></div></div>
<div class="t" style="left:3129.60px;top:272px;font-size:24.2px;line-height:31px;height:31px;color:#323130;letter-spacing:-0.612px;-webkit-text-stroke:0.22px #fff;">23:59</div>
<svg class="r" style="left:3222.00px;top:280.50px;" width="23" height="12" viewBox="0 0 23 12" fill="none"><path d="M0.7 0.7 L11.5 11.1 L22.3 0.7" stroke="#323130" stroke-width="1.8" fill="none"/></svg>
<div class="t" style="left:596.20px;top:358px;font-size:24.2px;line-height:31px;height:31px;color:#323130;letter-spacing:0.086px;-webkit-text-stroke:0.22px #fff;">Delivery action</div>
<svg class="r" style="left:770.50px;top:368.40px;" width="21.5" height="11.6" viewBox="0 0 21.5 11.6" fill="none"><path d="M0.7 0.7 L10.75 10.7 L20.8 0.7" stroke="#605e5c" stroke-width="1.4" fill="none"/></svg>
<svg class="r" style="left:3002.00px;top:366.00px;" width="18" height="30" viewBox="0 0 18 30" fill="none"><path stroke="#484644" stroke-width="1.55" fill="none" d="M9 1 V23.8 M0.9 15.5 L9 23.8 L17.1 15.5 M0.6 28.4 H17.4"/></svg>
<div class="t" style="left:3041.00px;top:366px;font-size:24.2px;line-height:31px;height:31px;color:#323130;letter-spacing:0.012px;-webkit-text-stroke:0.22px #fff;">Export chart data</div>
<svg class="r" style="left:0;top:0" width="3408" height="1446"><path d="M692.7 472.3 H3241 M692.7 600.7 H3241" stroke="#e6e6e6" stroke-width="1.6" fill="none"/><rect x="734.70" y="600.30" width="35.50" height="120.40" fill="#6897ba" stroke="#fff" stroke-width="1.8"/><rect x="734.70" y="720.40" width="35.50" height="4.60" fill="#5c0b4a" stroke="#fff" stroke-width="1.8"/><rect x="806.12" y="593.40" width="35.50" height="131.60" fill="#6897ba" stroke="#fff" stroke-width="1.8"/><rect x="877.54" y="589.10" width="35.50" height="130.30" fill="#6897ba" stroke="#fff" stroke-width="1.8"/><rect x="877.54" y="719.10" width="35.50" height="5.90" fill="#5c0b4a" stroke="#fff" stroke-width="1.8"/><rect x="948.96" y="584.10" width="35.50" height="134.30" fill="#6897ba" stroke="#fff" stroke-width="1.8"/><rect x="948.96" y="718.10" width="35.50" height="6.90" fill="#5c0b4a" stroke="#fff" stroke-width="1.8"/><rect x="1020.38" y="599.10" width="35.50" height="120.30" fill="#6897ba" stroke="#fff" stroke-width="1.8"/><rect x="1020.38" y="719.10" width="35.50" height="5.90" fill="#5c0b4a" stroke="#fff" stroke-width="1.8"/><rect x="1091.80" y="595.10" width="35.50" height="123.30" fill="#6897ba" stroke="#fff" stroke-width="1.8"/><rect x="1091.80" y="718.10" width="35.50" height="6.90" fill="#5c0b4a" stroke="#fff" stroke-width="1.8"/><rect x="1163.22" y="562.10" width="35.50" height="146.30" fill="#6897ba" stroke="#fff" stroke-width="1.8"/><rect x="1163.22" y="708.10" width="35.50" height="8.00" fill="#5c0b4a" stroke="#fff" stroke-width="1.8"/><rect x="1163.22" y="715.60" width="35.50" height="9.40" fill="#6767e2" stroke="#fff" stroke-width="1.8"/><rect x="1234.64" y="572.30" width="35.50" height="79.40" fill="#6897ba" stroke="#fff" stroke-width="1.8"/><rect x="1234.64" y="651.40" width="35.50" height="65.20" fill="#5c0b4a" stroke="#fff" stroke-width="1.8"/><rect x="1234.64" y="716.10" width="35.50" height="8.90" fill="#6767e2" stroke="#fff" stroke-width="1.8"/><rect x="1306.06" y="605.70" width="35.50" height="110.70" fill="#6897ba" stroke="#fff" stroke-width="1.8"/><rect x="1306.06" y="716.10" width="35.50" height="8.90" fill="#5c0b4a" stroke="#fff" stroke-width="1.8"/><rect x="1377.48" y="584.50" width="35.50" height="87.90" fill="#6897ba" stroke="#fff" stroke-width="1.8"/><rect x="1377.48" y="672.10" width="35.50" height="52.90" fill="#5c0b4a" stroke="#fff" stroke-width="1.8"/><rect x="1448.90" y="621.60" width="35.50" height="94.80" fill="#6897ba" stroke="#fff" stroke-width="1.8"/><rect x="1448.90" y="716.10" width="35.50" height="8.90" fill="#5c0b4a" stroke="#fff" stroke-width="1.8"/><rect x="1520.32" y="602.10" width="35.50" height="109.00" fill="#6897ba" stroke="#fff" stroke-width="1.8"/><rect x="1520.32" y="710.80" width="35.50" height="14.20" fill="#5c0b4a" stroke="#fff" stroke-width="1.8"/><rect x="1591.74" y="644.70" width="35.50" height="75.70" fill="#6897ba" stroke="#fff" stroke-width="1.8"/><rect x="1591.74" y="720.10" width="35.50" height="4.90" fill="#5c0b4a" stroke="#fff" stroke-width="1.8"/><rect x="1663.16" y="520.90" width="35.50" height="190.80" fill="#6897ba" stroke="#fff" stroke-width="1.8"/><rect x="1663.16" y="711.40" width="35.50" height="13.60" fill="#5c0b4a" stroke="#fff" stroke-width="1.8"/><rect x="1734.58" y="588.30" width="35.50" height="131.10" fill="#6897ba" stroke="#fff" stroke-width="1.8"/><rect x="1734.58" y="719.10" width="35.50" height="5.90" fill="#5c0b4a" stroke="#fff" stroke-width="1.8"/><rect x="1806.00" y="577.70" width="35.50" height="142.70" fill="#6897ba" stroke="#fff" stroke-width="1.8"/><rect x="1806.00" y="720.10" width="35.50" height="4.90" fill="#5c0b4a" stroke="#fff" stroke-width="1.8"/><rect x="1877.42" y="629.00" width="35.50" height="74.00" fill="#6897ba" stroke="#fff" stroke-width="1.8"/><rect x="1877.42" y="702.70" width="35.50" height="9.40" fill="#5c0b4a" stroke="#fff" stroke-width="1.8"/><rect x="1877.42" y="711.60" width="35.50" height="13.40" fill="#6767e2" stroke="#fff" stroke-width="1.8"/><rect x="1948.84" y="604.40" width="35.50" height="114.50" fill="#6897ba" stroke="#fff" stroke-width="1.8"/><rect x="1948.84" y="718.60" width="35.50" height="6.40" fill="#5c0b4a" stroke="#fff" stroke-width="1.8"/><rect x="2020.26" y="611.40" width="35.50" height="106.00" fill="#6897ba" stroke="#fff" stroke-width="1.8"/><rect x="2020.26" y="717.10" width="35.50" height="7.90" fill="#5c0b4a" stroke="#fff" stroke-width="1.8"/><rect x="2091.68" y="605.80" width="35.50" height="113.60" fill="#6897ba" stroke="#fff" stroke-width="1.8"/><rect x="2091.68" y="719.10" width="35.50" height="5.90" fill="#5c0b4a" stroke="#fff" stroke-width="1.8"/><rect x="2163.10" y="598.80" width="35.50" height="121.60" fill="#6897ba" stroke="#fff" stroke-width="1.8"/><rect x="2163.10" y="720.10" width="35.50" height="4.90" fill="#5c0b4a" stroke="#fff" stroke-width="1.8"/><rect x="2234.52" y="593.10" width="35.50" height="126.30" fill="#6897ba" stroke="#fff" stroke-width="1.8"/><rect x="2234.52" y="719.10" width="35.50" height="5.90" fill="#5c0b4a" stroke="#fff" stroke-width="1.8"/><rect x="2305.94" y="598.80" width="35.50" height="120.60" fill="#6897ba" stroke="#fff" stroke-width="1.8"/><rect x="2305.94" y="719.10" width="35.50" height="5.90" fill="#5c0b4a" stroke="#fff" stroke-width="1.8"/><rect x="2377.36" y="595.30" width="35.50" height="125.10" fill="#6897ba" stroke="#fff" stroke-width="1.8"/><rect x="2377.36" y="720.10" width="35.50" height="4.90" fill="#5c0b4a" stroke="#fff" stroke-width="1.8"/><rect x="2448.78" y="595.30" width="35.50" height="124.10" fill="#6897ba" stroke="#fff" stroke-width="1.8"/><rect x="2448.78" y="719.10" width="35.50" height="5.90" fill="#5c0b4a" stroke="#fff" stroke-width="1.8"/><rect x="2520.20" y="605.80" width="35.50" height="119.20" fill="#6897ba" stroke="#fff" stroke-width="1.8"/><rect x="2591.62" y="681.60" width="35.50" height="43.40" fill="#6897ba" stroke="#fff" stroke-width="1.8"/><rect x="2663.04" y="586.10" width="35.50" height="134.30" fill="#6897ba" stroke="#fff" stroke-width="1.8"/><rect x="2663.04" y="720.10" width="35.50" height="4.90" fill="#5c0b4a" stroke="#fff" stroke-width="1.8"/><rect x="2734.46" y="584.70" width="35.50" height="134.70" fill="#6897ba" stroke="#fff" stroke-width="1.8"/><rect x="2734.46" y="719.10" width="35.50" height="5.90" fill="#5c0b4a" stroke="#fff" stroke-width="1.8"/><rect x="2805.88" y="584.70" width="35.50" height="133.20" fill="#6897ba" stroke="#fff" stroke-width="1.8"/><rect x="2805.88" y="717.60" width="35.50" height="7.40" fill="#5c0b4a" stroke="#fff" stroke-width="1.8"/><rect x="2948.72" y="533.50" width="35.50" height="184.40" fill="#6897ba" stroke="#fff" stroke-width="1.8"/><rect x="2948.72" y="717.60" width="35.50" height="7.40" fill="#5c0b4a" stroke="#fff" stroke-width="1.8"/><rect x="3020.14" y="618.40" width="35.50" height="97.50" fill="#6897ba" stroke="#fff" stroke-width="1.8"/><rect x="3020.14" y="715.60" width="35.50" height="9.40" fill="#5c0b4a" stroke="#fff" stroke-width="1.8"/><rect x="3091.56" y="629.00" width="35.50" height="88.90" fill="#6897ba" stroke="#fff" stroke-width="1.8"/><rect x="3091.56" y="717.60" width="35.50" height="7.40" fill="#5c0b4a" stroke="#fff" stroke-width="1.8"/><rect x="3162.98" y="658.40" width="35.50" height="62.00" fill="#6897ba" stroke="#fff" stroke-width="1.8"/><rect x="3162.98" y="720.10" width="35.50" height="4.90" fill="#5c0b4a" stroke="#fff" stroke-width="1.8"/><path d="M692.7 725.3 H3241" stroke="#cdd0ef" stroke-width="2.3" fill="none"/><path d="M823.87 726 V742 M966.71 726 V742 M1109.55 726 V742 M1252.39 726 V742 M1395.23 726 V742 M1538.07 726 V742 M1680.91 726 V742 M1823.75 726 V742 M1966.59 726 V742 M2109.43 726 V742 M2252.27 726 V742 M2395.11 726 V742 M2537.95 726 V742 M2680.79 726 V742 M2823.63 726 V742 M2966.47 726 V742 M3109.31 726 V742" stroke="#d6d9f3" stroke-width="1.8" fill="none"/></svg>
<div class="t" style="left:647.00px;top:459px;font-size:21px;line-height:27px;height:27px;color:#605e5c;letter-spacing:-1.340px;-webkit-text-stroke:0.22px #fff;">2k</div>
<div class="t" style="left:647.00px;top:584px;font-size:21px;line-height:27px;height:27px;color:#605e5c;letter-spacing:-1.340px;-webkit-text-stroke:0.22px #fff;">1k</div>
<div class="t" style="left:655.50px;top:711px;font-size:21px;line-height:27px;height:27px;color:#605e5c;letter-spacing:-0.680px;-webkit-text-stroke:0.22px #fff;">0</div>
<div class="t" style="left:573.5px;top:588px;width:94px;height:21px;line-height:21px;font-size:20.5px;color:#605e5c;transform:rotate(-90deg);transform-origin:center;text-align:center;letter-spacing:-0.1px;">Recipients</div>
<div class="t" style="left:769.12px;top:738px;font-size:20.6px;line-height:27px;height:27px;color:#605e5c;letter-spacing:-0.991px;-webkit-text-stroke:0.22px #fff;">Mar 30, 2022</div>
<div class="t" style="left:789.87px;top:763px;font-size:20.6px;line-height:27px;height:27px;color:#605e5c;letter-spacing:-1.083px;-webkit-text-stroke:0.22px #fff;">1:00 AM</div>
<div class="t" style="left:911.96px;top:738px;font-size:20.6px;line-height:27px;height:27px;color:#605e5c;letter-spacing:-0.991px;-webkit-text-stroke:0.22px #fff;">Mar 30, 2022</div>
<div class="t" style="left:932.71px;top:763px;font-size:20.6px;line-height:27px;height:27px;color:#605e5c;letter-spacing:-1.083px;-webkit-text-stroke:0.22px #fff;">3:00 AM</div>
<div class="t" style="left:1054.80px;top:738px;font-size:20.6px;line-height:27px;height:27px;color:#605e5c;letter-spacing:-0.991px;-webkit-text-stroke:0.22px #fff;">Mar 30, 2022</div>
<div class="t" style="left:1075.55px;top:763px;font-size:20.6px;line-height:27px;height:27px;color:#605e5c;letter-spacing:-1.083px;-webkit-text-stroke:0.22px #fff;">5:00 AM</div>
<div class="t" style="left:1197.64px;top:738px;font-size:20.6px;line-height:27px;height:27px;color:#605e5c;letter-spacing:-0.991px;-webkit-text-stroke:0.22px #fff;">Mar 30, 2022</div>
<div class="t" style="left:1218.39px;top:763px;font-size:20.6px;line-height:27px;height:27px;color:#605e5c;letter-spacing:-1.083px;-webkit-text-stroke:0.22px #fff;">7:00 AM</div>
<div class="t" style="left:1340.48px;top:738px;font-size:20.6px;line-height:27px;height:27px;color:#605e5c;letter-spacing:-0.991px;-webkit-text-stroke:0.22px #fff;">Mar 30, 2022</div>
<div class="t" style="left:1361.23px;top:763px;font-size:20.6px;line-height:27px;height:27px;color:#605e5c;letter-spacing:-1.083px;-webkit-text-stroke:0.22px #fff;">9:00 AM</div>
<div class="t" style="left:1483.32px;top:738px;font-size:20.6px;line-height:27px;height:27px;color:#605e5c;letter-spacing:-0.991px;-webkit-text-stroke:0.22px #fff;">Mar 30, 2022</div>
<div class="t" style="left:1498.57px;top:763px;font-size:20.6px;line-height:27px;height:27px;color:#605e5c;letter-spacing:-0.814px;-webkit-text-stroke:0.22px #fff;">11:00 AM</div>
<div class="t" style="left:1626.16px;top:738px;font-size:20.6px;line-height:27px;height:27px;color:#605e5c;letter-spacing:-0.991px;-webkit-text-stroke:0.22px #fff;">Mar 30, 2022</div>
<div class="t" style="left:1647.56px;top:763px;font-size:20.6px;line-height:27px;height:27px;color:#605e5c;letter-spacing:-1.431px;-webkit-text-stroke:0.22px #fff;">1:00 PM</div>
<div class="t" style="left:1769.00px;top:738px;font-size:20.6px;line-height:27px;height:27px;color:#605e5c;letter-spacing:-0.991px;-webkit-text-stroke:0.22px #fff;">Mar 30, 2022</div>
<div class="t" style="left:1790.40px;top:763px;font-size:20.6px;line-height:27px;height:27px;color:#605e5c;letter-spacing:-1.431px;-webkit-text-stroke:0.22px #fff;">3:00 PM</div>
<div class="t" style="left:1911.84px;top:738px;font-size:20.6px;line-height:27px;height:27px;color:#605e5c;letter-spacing:-0.991px;-webkit-text-stroke:0.22px #fff;">Mar 30, 2022</div>
<div class="t" style="left:1933.24px;top:763px;font-size:20.6px;line-height:27px;height:27px;color:#605e5c;letter-spacing:-1.431px;-webkit-text-stroke:0.22px #fff;">5:00 PM</div>
<div class="t" style="left:2054.68px;top:738px;font-size:20.6px;line-height:27px;height:27px;color:#605e5c;letter-spacing:-0.991px;-webkit-text-stroke:0.22px #fff;">Mar 30, 2022</div>
<div class="t" style="left:2076.08px;top:763px;font-size:20.6px;line-height:27px;height:27px;color:#605e5c;letter-spacing:-1.431px;-webkit-text-stroke:0.22px #fff;">7:00 PM</div>
<div class="t" style="left:2197.52px;top:738px;font-size:20.6px;line-height:27px;height:27px;color:#605e5c;letter-spacing:-0.991px;-webkit-text-stroke:0.22px #fff;">Mar 30, 2022</div>
<div class="t" style="left:2218.92px;top:763px;font-size:20.6px;line-height:27px;height:27px;color:#605e5c;letter-spacing:-1.431px;-webkit-text-stroke:0.22px #fff;">9:00 PM</div>
<div class="t" style="left:2340.36px;top:738px;font-size:20.6px;line-height:27px;height:27px;color:#605e5c;letter-spacing:-0.991px;-webkit-text-stroke:0.22px #fff;">Mar 30, 2022</div>
<div class="t" style="left:2356.11px;top:763px;font-size:20.6px;line-height:27px;height:27px;color:#605e5c;letter-spacing:-1.081px;-webkit-text-stroke:0.22px #fff;">11:00 PM</div>
<div class="t" style="left:2483.20px;top:738px;font-size:20.6px;line-height:27px;height:27px;color:#605e5c;letter-spacing:-0.991px;-webkit-text-stroke:0.22px #fff;">Mar 31, 2022</div>
<div class="t" style="left:2503.95px;top:763px;font-size:20.6px;line-height:27px;height:27px;color:#605e5c;letter-spacing:-1.083px;-webkit-text-stroke:0.22px #fff;">1:00 AM</div>
<div class="t" style="left:2626.04px;top:738px;font-size:20.6px;line-height:27px;height:27px;color:#605e5c;letter-spacing:-0.991px;-webkit-text-stroke:0.22px #fff;">Mar 31, 2022</div>
<div class="t" style="left:2646.79px;top:763px;font-size:20.6px;line-height:27px;height:27px;color:#605e5c;letter-spacing:-1.083px;-webkit-text-stroke:0.22px #fff;">3:00 AM</div>
<div class="t" style="left:2768.88px;top:738px;font-size:20.6px;line-height:27px;height:27px;color:#605e5c;letter-spacing:-0.991px;-webkit-text-stroke:0.22px #fff;">Mar 31, 2022</div>
<div class="t" style="left:2789.63px;top:763px;font-size:20.6px;line-height:27px;height:27px;color:#605e5c;letter-spacing:-1.083px;-webkit-text-stroke:0.22px #fff;">5:00 AM</div>
<div class="t" style="left:2911.72px;top:738px;font-size:20.6px;line-height:27px;height:27px;color:#605e5c;letter-spacing:-0.991px;-webkit-text-stroke:0.22px #fff;">Mar 31, 2022</div>
<div class="t" style="left:2932.47px;top:763px;font-size:20.6px;line-height:27px;height:27px;color:#605e5c;letter-spacing:-1.083px;-webkit-text-stroke:0.22px #fff;">7:00 AM</div>
<div class="t" style="left:3054.56px;top:738px;font-size:20.6px;line-height:27px;height:27px;color:#605e5c;letter-spacing:-0.991px;-webkit-text-stroke:0.22px #fff;">Mar 31, 2022</div>
<div class="t" style="left:3075.31px;top:763px;font-size:20.6px;line-height:27px;height:27px;color:#605e5c;letter-spacing:-1.083px;-webkit-text-stroke:0.22px #fff;">9:00 AM</div>
<div class="t" style="left:1830.10px;top:799px;font-size:20.6px;line-height:27px;height:27px;color:#605e5c;letter-spacing:-0.140px;-webkit-text-stroke:0.22px #fff;">Chart time zone: (UTC -07:00)</div>
<div class="r" style="left:617.00px;top:861.40px;width:21.20px;height:20.40px;background:#6897ba;"></div>
<div class="t" style="left:651.00px;top:859px;font-size:20.6px;line-height:27px;height:27px;color:#323130;letter-spacing:0.268px;-webkit-text-stroke:0.22px #fff;">Delivered to junk</div>
<div class="t" style="left:596.40px;top:920px;font-size:28.2px;line-height:35px;height:35px;color:#2f2e2d;letter-spacing:-0.544px;-webkit-text-stroke:0.56px #2f2e2d;">Email</div>
<div class="r" style="left:595.50px;top:970.00px;width:69.00px;height:3.70px;background:#5472cc;"></div>
<div class="t" style="left:707.80px;top:920px;font-size:28.2px;line-height:35px;height:35px;color:#323130;letter-spacing:-0.713px;-webkit-text-stroke:0.22px #fff;">URL clicks</div>
<div class="t" style="left:877.00px;top:920px;font-size:28.2px;line-height:35px;height:35px;color:#323130;letter-spacing:-1.352px;-webkit-text-stroke:0.22px #fff;">Top URLs</div>
<div class="t" style="left:1034.00px;top:920px;font-size:28.2px;line-height:35px;height:35px;color:#323130;letter-spacing:-1.223px;-webkit-text-stroke:0.22px #fff;">Top clicks</div>
<div class="t" style="left:1187.50px;top:920px;font-size:28.2px;line-height:35px;height:35px;color:#323130;letter-spacing:-0.032px;-webkit-text-stroke:0.22px #fff;">Top targeted users</div>
<div class="t" style="left:1465.30px;top:920px;font-size:28.2px;line-height:35px;height:35px;color:#323130;letter-spacing:-0.194px;-webkit-text-stroke:0.22px #fff;">Email origin</div>
<div class="t" style="left:1654.20px;top:920px;font-size:28.2px;line-height:35px;height:35px;color:#323130;letter-spacing:-0.618px;-webkit-text-stroke:0.22px #fff;">Campaign</div>
<div class="r" style="left:3194.90px;top:899.80px;width:63.10px;height:62.90px;background:#e8e8e8;"></div>
<svg class="r" style="left:3212.00px;top:917.00px;" width="29" height="29" viewBox="0 0 29 29" fill="none"><path stroke="#1b1a19" stroke-width="2.3" fill="none" d="M2.2 26.3 L26.9 2.2 M18 2.2 H26.9 V11 M2.2 18 V26.3 H11.3"/></svg>
<div class="r" style="left:581.50px;top:977.40px;width:268.00px;height:70.30px;background:#e8e8e8;"></div>
<div class="t" style="left:596.40px;top:998px;font-size:24.2px;line-height:31px;height:31px;color:#2f2e2d;letter-spacing:0.133px;-webkit-text-stroke:0.48px #2f2e2d;">Message actions</div>
<svg class="r" style="left:796.00px;top:1007.50px;" width="20" height="10.8" viewBox="0 0 20 10.8" fill="none"><path d="M0.7 0.7 L10.0 9.9 L19.3 0.7" stroke="#484644" stroke-width="1.4" fill="none"/></svg>
<div class="t" style="left:2450.30px;top:998px;font-size:24.2px;line-height:31px;height:31px;color:#2f2e2d;letter-spacing:0.113px;-webkit-text-stroke:0.48px #2f2e2d;">1 of 34640 selected</div>
<svg class="r" style="left:2715.00px;top:996.90px;" width="18" height="30" viewBox="0 0 18 30" fill="none"><path stroke="#484644" stroke-width="1.55" fill="none" d="M9 1 V23.8 M0.9 15.5 L9 23.8 L17.1 15.5 M0.6 28.4 H17.4"/></svg>
<div class="t" style="left:2754.50px;top:998px;font-size:24.2px;line-height:31px;height:31px;color:#323130;letter-spacing:0.012px;-webkit-text-stroke:0.22px #fff;">Export email list</div>
<svg class="r" style="left:2972.00px;top:1000.00px;" width="29" height="26" viewBox="0 0 29 26" fill="none"><path stroke="#323130" stroke-width="1.8" fill="none" d="M1 1 H27 V11 M1 1 V22 H15 M1 6.5 H27 M9.5 6.5 V22 M18 6.5 V12"/><circle cx="22.5" cy="19.5" r="3.2" stroke="#323130" stroke-width="1.8" fill="none"/><path stroke="#323130" stroke-width="2" d="M22.5 13.5 V15.5 M22.5 23.5 V25.5 M16.5 19.5 H18.5 M26.5 19.5 H28.5 M18.3 15.3 L19.7 16.7 M25.3 22.3 L26.7 23.7 M18.3 23.7 L19.7 22.3 M25.3 16.7 L26.7 15.3"/></svg>
<div class="t" style="left:3014.40px;top:998px;font-size:24.2px;line-height:31px;height:31px;color:#323130;letter-spacing:-0.009px;-webkit-text-stroke:0.22px #fff;">Customize columns</div>
<div class="t" style="left:667.40px;top:1076px;font-size:20.6px;line-height:27px;height:27px;color:#2f2e2d;letter-spacing:0.033px;-webkit-text-stroke:0.41px #2f2e2d;">Date (UTC -07:00)</div>
<div class="t" style="left:982.00px;top:1076px;font-size:20.6px;line-height:27px;height:27px;color:#2f2e2d;letter-spacing:-0.387px;-webkit-text-stroke:0.41px #2f2e2d;">Subject</div>
<div class="t" style="left:1575.20px;top:1076px;font-size:20.6px;line-height:27px;height:27px;color:#2f2e2d;letter-spacing:0.257px;-webkit-text-stroke:0.41px #2f2e2d;">Recipient</div>
<div class="t" style="left:2162.00px;top:1076px;font-size:20.6px;line-height:27px;height:27px;color:#2f2e2d;letter-spacing:-0.379px;-webkit-text-stroke:0.41px #2f2e2d;">Tags</div>
<div class="t" style="left:2373.90px;top:1076px;font-size:20.6px;line-height:27px;height:27px;color:#2f2e2d;letter-spacing:-0.072px;-webkit-text-stroke:0.41px #2f2e2d;">Sender</div>
<div class="t" style="left:2673.90px;top:1076px;font-size:20.6px;line-height:27px;height:27px;color:#2f2e2d;letter-spacing:0.567px;-webkit-text-stroke:0.41px #2f2e2d;">Additional act...</div>
<div class="t" style="left:2841.60px;top:1076px;font-size:20.6px;line-height:27px;height:27px;color:#2f2e2d;letter-spacing:0.344px;-webkit-text-stroke:0.41px #2f2e2d;">Latest deliver...</div>
<div class="t" style="left:3008.80px;top:1076px;font-size:20.6px;line-height:27px;height:27px;color:#2f2e2d;letter-spacing:0.605px;-webkit-text-stroke:0.41px #2f2e2d;">Original deliv...</div>
<div class="r" style="left:581.50px;top:1123.60px;width:2631.80px;height:1.60px;background:#ededed;"></div>
<div class="r" style="left:581.50px;top:1123.50px;width:2594.50px;height:75.30px;background:#e7e7e7;"></div>
<div class="r" style="left:581.50px;top:1275.00px;width:2594.50px;height:1.70px;background:#e9e9e9;"></div>
<div class="r" style="left:581.50px;top:1351.00px;width:2594.50px;height:1.70px;background:#e9e9e9;"></div>
<svg class="r" style="left:608.00px;top:1146.00px;" width="32" height="32" viewBox="0 0 32 32" fill="none"><circle cx="15.9" cy="15.8" r="14.7" fill="#5674cd" stroke="#fff" stroke-width="1.9"/></svg>
<svg class="r" style="left:616.00px;top:1155.70px;" width="16" height="12" viewBox="0 0 16 12" fill="none"><path d="M1.3 6 L6 10.5 L14.6 1.5" stroke="#fff" stroke-width="2.6" fill="none"/></svg>
<div class="t" style="left:667.40px;top:1147px;font-size:24.2px;line-height:31px;height:31px;color:#2f2e2d;-webkit-text-stroke:0.48px #2f2e2d;letter-spacing:-0.306px;">Mar 31, 2022 10:27 AM</div>
<div class="t" style="left:1071.43px;top:1147px;font-size:24.2px;line-height:31px;height:31px;color:#4f6fc8;letter-spacing:-0.407px;width:433.9px;overflow:hidden;-webkit-text-stroke:0.22px #e7e7e7;">Payment details</div>
<svg class="r" style="left:1464.00px;top:1143.60px;" width="25" height="29" viewBox="0 0 25 29" fill="none"><path stroke="#4f6fc8" stroke-width="1.8" fill="none" d="M7.8 22.2 H1 V1.9 H11.4 L16.6 6.6"/><path stroke="#4f6fc8" stroke-width="1.8" fill="none" d="M7.8 6.6 H18.4 L23.8 11.4 V27.3 H7.8Z M18.4 6.6 V11.4 H23.8"/></svg>
<svg class="r" style="left:2106.50px;top:1143.60px;" width="25" height="29" viewBox="0 0 25 29" fill="none"><path stroke="#4f6fc8" stroke-width="1.8" fill="none" d="M7.8 22.2 H1 V1.9 H11.4 L16.6 6.6"/><path stroke="#4f6fc8" stroke-width="1.8" fill="none" d="M7.8 6.6 H18.4 L23.8 11.4 V27.3 H7.8Z M18.4 6.6 V11.4 H23.8"/></svg>
<svg class="r" style="left:2618.60px;top:1143.60px;" width="25" height="29" viewBox="0 0 25 29" fill="none"><path stroke="#4f6fc8" stroke-width="1.8" fill="none" d="M7.8 22.2 H1 V1.9 H11.4 L16.6 6.6"/><path stroke="#4f6fc8" stroke-width="1.8" fill="none" d="M7.8 6.6 H18.4 L23.8 11.4 V27.3 H7.8Z M18.4 6.6 V11.4 H23.8"/></svg>
<svg class="r" style="left:1518.00px;top:1147.00px;" width="28" height="21" viewBox="0 0 28 21" fill="none"><path stroke="#4f6fc8" stroke-width="1.8" fill="none" d="M16.8 5.4 H1.4 V19.5 H22.6 V11.5 M18.4 9.6 L26 2"/><path d="M21 1 H27 V7Z" fill="#4f6fc8"/></svg>
<div class="t" style="left:1575.20px;top:1147px;font-size:24.2px;line-height:31px;height:31px;color:#4f6fc8;letter-spacing:0.221px;-webkit-text-stroke:0.22px #e7e7e7;">clove@mtptestlab01.onmicrosoft.com</div>
<div class="t" style="left:2162.50px;top:1147px;font-size:24.2px;line-height:31px;height:31px;color:#323130;-webkit-text-stroke:0.22px #e7e7e7;">-</div>
<div class="t" style="left:2373.90px;top:1147px;font-size:24.2px;line-height:31px;height:31px;color:#323130;letter-spacing:-0.328px;-webkit-text-stroke:0.22px #e7e7e7;">sales@utanoafrica....</div>
<div class="t" style="left:2674.00px;top:1150px;font-size:20.6px;line-height:27px;height:27px;color:#605e5c;-webkit-text-stroke:0.22px #e7e7e7;">-</div>
<div class="t" style="left:2841.60px;top:1150px;font-size:20.6px;line-height:27px;height:27px;color:#605e5c;letter-spacing:0.057px;-webkit-text-stroke:0.22px #e7e7e7;">Quarantine</div>
<div class="t" style="left:3008.80px;top:1150px;font-size:20.6px;line-height:27px;height:27px;color:#605e5c;letter-spacing:0.057px;-webkit-text-stroke:0.22px #e7e7e7;">Quarantine</div>
<div class="t" style="left:667.40px;top:1223px;font-size:24.2px;line-height:31px;height:31px;color:#2f2e2d;-webkit-text-stroke:0.48px #2f2e2d;letter-spacing:-0.306px;">Mar 31, 2022 10:26 AM</div>
<div class="t" style="left:1071.43px;top:1223px;font-size:24.2px;line-height:31px;height:31px;color:#4f6fc8;letter-spacing:-0.407px;width:433.9px;overflow:hidden;-webkit-text-stroke:0.22px #fff;">Payment details</div>
<svg class="r" style="left:1518.00px;top:1222.70px;" width="28" height="21" viewBox="0 0 28 21" fill="none"><path stroke="#4f6fc8" stroke-width="1.8" fill="none" d="M16.8 5.4 H1.4 V19.5 H22.6 V11.5 M18.4 9.6 L26 2"/><path d="M21 1 H27 V7Z" fill="#4f6fc8"/></svg>
<div class="t" style="left:1575.20px;top:1223px;font-size:24.2px;line-height:31px;height:31px;color:#4f6fc8;letter-spacing:0.221px;-webkit-text-stroke:0.22px #fff;">clove@mtptestlab01.onmicrosoft.com</div>
<div class="t" style="left:2162.50px;top:1223px;font-size:24.2px;line-height:31px;height:31px;color:#323130;-webkit-text-stroke:0.22px #fff;">-</div>
<div class="t" style="left:2373.90px;top:1223px;font-size:24.2px;line-height:31px;height:31px;color:#323130;letter-spacing:-0.193px;-webkit-text-stroke:0.22px #fff;">sales@utanoafrica.com</div>
<div class="t" style="left:2674.00px;top:1226px;font-size:20.6px;line-height:27px;height:27px;color:#605e5c;-webkit-text-stroke:0.22px #fff;">-</div>
<div class="t" style="left:2841.60px;top:1226px;font-size:20.6px;line-height:27px;height:27px;color:#605e5c;letter-spacing:0.057px;-webkit-text-stroke:0.22px #fff;">Quarantine</div>
<div class="t" style="left:3008.80px;top:1226px;font-size:20.6px;line-height:27px;height:27px;color:#605e5c;letter-spacing:0.057px;-webkit-text-stroke:0.22px #fff;">Quarantine</div>
<div class="t" style="left:667.40px;top:1299px;font-size:24.2px;line-height:31px;height:31px;color:#2f2e2d;-webkit-text-stroke:0.48px #2f2e2d;letter-spacing:-0.306px;">Mar 31, 2022 10:25 AM</div>
<div class="t" style="left:1042.68px;top:1299px;font-size:24.2px;line-height:31px;height:31px;color:#4f6fc8;letter-spacing:0.143px;width:462.6px;overflow:hidden;-webkit-text-stroke:0.22px #fff;">Hello, come and get know better Shirleen Xoxo</div>
<svg class="r" style="left:1518.00px;top:1298.60px;" width="28" height="21" viewBox="0 0 28 21" fill="none"><path stroke="#4f6fc8" stroke-width="1.8" fill="none" d="M16.8 5.4 H1.4 V19.5 H22.6 V11.5 M18.4 9.6 L26 2"/><path d="M21 1 H27 V7Z" fill="#4f6fc8"/></svg>
<div class="t" style="left:1575.20px;top:1299px;font-size:24.2px;line-height:31px;height:31px;color:#4f6fc8;letter-spacing:0.221px;-webkit-text-stroke:0.22px #fff;">clove@mtptestlab01.onmicrosoft.com</div>
<div class="t" style="left:2162.50px;top:1299px;font-size:24.2px;line-height:31px;height:31px;color:#323130;-webkit-text-stroke:0.22px #fff;">-</div>
<div class="t" style="left:2373.90px;top:1299px;font-size:24.2px;line-height:31px;height:31px;color:#323130;letter-spacing:0.104px;-webkit-text-stroke:0.22px #fff;">whfwmayfly.42@fibertel....</div>
<div class="t" style="left:2674.00px;top:1302px;font-size:20.6px;line-height:27px;height:27px;color:#605e5c;-webkit-text-stroke:0.22px #fff;">-</div>
<div class="t" style="left:2841.60px;top:1302px;font-size:20.6px;line-height:27px;height:27px;color:#605e5c;letter-spacing:0.112px;-webkit-text-stroke:0.22px #fff;">Junk folder</div>
<div class="t" style="left:3008.80px;top:1302px;font-size:20.6px;line-height:27px;height:27px;color:#605e5c;letter-spacing:0.112px;-webkit-text-stroke:0.22px #fff;">Junk folder</div>
<div class="t" style="left:667.40px;top:1375px;font-size:24.2px;line-height:31px;height:31px;color:#2f2e2d;-webkit-text-stroke:0.48px #2f2e2d;letter-spacing:-0.306px;">Mar 31, 2022 10:24 AM</div>
<div class="t" style="left:1086.19px;top:1375px;font-size:24.2px;line-height:31px;height:31px;color:#4f6fc8;letter-spacing:-0.056px;width:419.1px;overflow:hidden;-webkit-text-stroke:0.22px #fff;">Влажные протирочные салфетки для экранов</div>
<svg class="r" style="left:1518.00px;top:1374.60px;" width="28" height="21" viewBox="0 0 28 21" fill="none"><path stroke="#4f6fc8" stroke-width="1.8" fill="none" d="M16.8 5.4 H1.4 V19.5 H22.6 V11.5 M18.4 9.6 L26 2"/><path d="M21 1 H27 V7Z" fill="#4f6fc8"/></svg>
<div class="t" style="left:1575.20px;top:1375px;font-size:24.2px;line-height:31px;height:31px;color:#4f6fc8;letter-spacing:0.221px;-webkit-text-stroke:0.22px #fff;">clove@mtptestlab01.onmicrosoft.com</div>
<div class="t" style="left:2162.50px;top:1375px;font-size:24.2px;line-height:31px;height:31px;color:#323130;-webkit-text-stroke:0.22px #fff;">-</div>
<div class="t" style="left:2373.90px;top:1375px;font-size:24.2px;line-height:31px;height:31px;color:#323130;letter-spacing:0.307px;-webkit-text-stroke:0.22px #fff;">torg@apogu.ru</div>
<div class="t" style="left:2674.00px;top:1378px;font-size:20.6px;line-height:27px;height:27px;color:#605e5c;-webkit-text-stroke:0.22px #fff;">-</div>
<div class="t" style="left:2841.60px;top:1378px;font-size:20.6px;line-height:27px;height:27px;color:#605e5c;letter-spacing:0.112px;-webkit-text-stroke:0.22px #fff;">Junk folder</div>
<div class="t" style="left:3008.80px;top:1378px;font-size:20.6px;line-height:27px;height:27px;color:#605e5c;letter-spacing:0.112px;-webkit-text-stroke:0.22px #fff;">Junk folder</div>
<div class="r" style="left:3213.50px;top:1051.00px;width:44.50px;height:376.00px;background:#f1f1f1;"></div>
<div class="r" style="left:3215.00px;top:1096.40px;width:42.00px;height:44.20px;background:#c1c1c1;"></div>
<svg class="r" style="left:3224.20px;top:1069.00px;" width="23" height="11.5" viewBox="0 0 23 11.5" fill="none"><path d="M0 11.5 L11.5 0 L23 11.5Z" fill="#a3a3a3"/></svg>
<div class="r" style="left:3343.00px;top:13.00px;width:45.00px;height:1414.00px;background:#f1f1f1;"></div>
<div class="r" style="left:3344.80px;top:57.80px;width:41.40px;height:1222.80px;background:#c1c1c1;"></div>
<svg class="r" style="left:3354.00px;top:30.00px;" width="23" height="12" viewBox="0 0 23 12" fill="none"><path d="M0 12 L11.5 0 L23 12Z" fill="#a3a3a3"/></svg>
<svg class="r" style="left:3354.00px;top:1399.50px;" width="23" height="12" viewBox="0 0 23 12" fill="none"><path d="M0 0 L23 0 L11.5 12Z" fill="#505050"/></svg>
<div class="r" style="left:829.4px;top:329.6px;width:366.2px;height:1083.0px;background:#fff;border-radius:3.5px;box-shadow:0 5.6px 12.7px rgba(0,0,0,0.132),0 1px 3.2px rgba(0,0,0,0.108);"></div>
<div class="t" style="left:932.60px;top:350px;font-size:20.6px;line-height:27px;height:27px;color:#323130;letter-spacing:0.601px;-webkit-text-stroke:0.41px #323130;">Move &amp; delete</div>
<div class="t" style="left:929.60px;top:411px;font-size:24.2px;line-height:31px;height:31px;color:#323130;letter-spacing:0.481px;-webkit-text-stroke:0.22px #fff;">Move to junk folder</div>
<div class="t" style="left:929.60px;top:474px;font-size:24.2px;line-height:31px;height:31px;color:#323130;letter-spacing:0.336px;-webkit-text-stroke:0.22px #fff;">Move to deleted items</div>
<div class="t" style="left:929.60px;top:538px;font-size:24.2px;line-height:31px;height:31px;color:#323130;letter-spacing:0.027px;-webkit-text-stroke:0.22px #fff;">Soft delete</div>
<div class="t" style="left:929.60px;top:601px;font-size:24.2px;line-height:31px;height:31px;color:#323130;letter-spacing:0.062px;-webkit-text-stroke:0.22px #fff;">Hard delete</div>
<div class="t" style="left:929.60px;top:665px;font-size:24.2px;line-height:31px;height:31px;color:#323130;letter-spacing:0.534px;-webkit-text-stroke:0.22px #fff;">Move to inbox</div>
<div class="r" style="left:829.40px;top:710.60px;width:366.20px;height:1.80px;background:#ececec;"></div>
<div class="t" style="left:932.60px;top:732px;font-size:20.6px;line-height:27px;height:27px;color:#323130;letter-spacing:0.538px;-webkit-text-stroke:0.41px #323130;">Track &amp; notify</div>
<div class="t" style="left:929.60px;top:794px;font-size:24.2px;line-height:31px;height:31px;color:#323130;letter-spacing:0.204px;-webkit-text-stroke:0.22px #fff;">Trigger investigation</div>
<div class="t" style="left:929.60px;top:857px;font-size:24.2px;line-height:31px;height:31px;color:#323130;letter-spacing:-0.067px;-webkit-text-stroke:0.22px #fff;">Investigate Sender</div>
<div class="t" style="left:929.60px;top:921px;font-size:24.2px;line-height:31px;height:31px;color:#323130;letter-spacing:-0.031px;-webkit-text-stroke:0.22px #fff;">Investigate Recipient</div>
<div class="t" style="left:929.60px;top:984px;font-size:24.2px;line-height:31px;height:31px;color:#323130;letter-spacing:0.470px;-webkit-text-stroke:0.22px #fff;">Add to remediation</div>
<div class="t" style="left:929.60px;top:1048px;font-size:24.2px;line-height:31px;height:31px;color:#323130;letter-spacing:0.072px;-webkit-text-stroke:0.22px #fff;">Contact recipients</div>
<div class="r" style="left:829.40px;top:1093.40px;width:366.20px;height:1.80px;background:#ececec;"></div>
<div class="t" style="left:932.60px;top:1115px;font-size:20.6px;line-height:27px;height:27px;color:#323130;letter-spacing:0.361px;-webkit-text-stroke:0.41px #323130;">Start new submission</div>
<div class="t" style="left:929.60px;top:1176px;font-size:24.2px;line-height:31px;height:31px;color:#323130;letter-spacing:-0.210px;-webkit-text-stroke:0.22px #fff;">Report clean</div>
<div class="t" style="left:929.60px;top:1240px;font-size:24.2px;line-height:31px;height:31px;color:#323130;letter-spacing:0.126px;-webkit-text-stroke:0.22px #fff;">Report phishing</div>
<div class="t" style="left:929.60px;top:1304px;font-size:24.2px;line-height:31px;height:31px;color:#323130;letter-spacing:-0.065px;-webkit-text-stroke:0.22px #fff;">Report malware</div>
<div class="t" style="left:929.60px;top:1367px;font-size:24.2px;line-height:31px;height:31px;color:#323130;letter-spacing:-0.122px;-webkit-text-stroke:0.22px #fff;">Report spam</div>
<div class="r" style="left:3273.20px;top:1078.20px;width:84.60px;height:84.40px;background:#201f1e;"></div>
<div class="r" style="left:3273.20px;top:1162.50px;width:84.60px;height:88.50px;background:#56808b;"></div>
<div class="r" style="left:3273.20px;top:1250.90px;width:84.60px;height:84.90px;background:#201f1e;"></div>
<svg class="r" style="left:3301.00px;top:1106.00px;" width="29" height="29" viewBox="0 0 29 29" fill="none"><circle cx="14.5" cy="14.5" r="13" stroke="#fff" stroke-width="2" fill="none"/><path stroke="#fff" stroke-width="2" fill="none" d="M5.5 18.5 A9.3 9.3 0 0 1 18 6 M22.5 10 A9.3 9.3 0 0 1 23.5 18.5 M16.3 12.7 L22 7"/><circle cx="14.5" cy="14.5" r="2.4" stroke="#fff" stroke-width="2" fill="none"/></svg>
<svg class="r" style="left:3303.50px;top:1191.00px;" width="24" height="28" viewBox="0 0 24 28" fill="none"><path stroke="#fff" stroke-width="2" fill="none" stroke-width="2.6" d="M3 15 V11.5 A8.5 8.5 0 0 1 20 11.5 V15"/><path fill="#fff" d="M1.2 12 H6.5 V21 H4 A2.8 2.8 0 0 1 1.2 18.2Z M16.5 12 H21.8 V18.2 A2.8 2.8 0 0 1 19 21 H16.5Z"/><path stroke="#fff" stroke-width="2" fill="none" d="M19.5 20 C19.5 23.5 17 25 13.5 25"/><rect x="8" y="22.8" width="6.5" height="4.4" rx="2.2" fill="#fff"/></svg>
<svg class="r" style="left:3300.50px;top:1280.50px;" width="30" height="27" viewBox="0 0 30 27" fill="none"><path stroke="#fff" stroke-width="2" fill="none" stroke-width="2.2" d="M1.5 1.5 H28.5 V19 H11 L5 25 V19 H1.5Z"/><path fill="#fff" d="M9.5 7.5 H13.5 V11 L11.5 13.5 H10.3 L11.3 11 H9.5Z M16.5 7.5 H20.5 V11 L18.5 13.5 H17.3 L18.3 11 H16.5Z"/></svg>
<div class="r" style="left:1.00px;top:1427.00px;width:3387.00px;height:5.00px;background:#171d40;"></div>
</div></body></html>
